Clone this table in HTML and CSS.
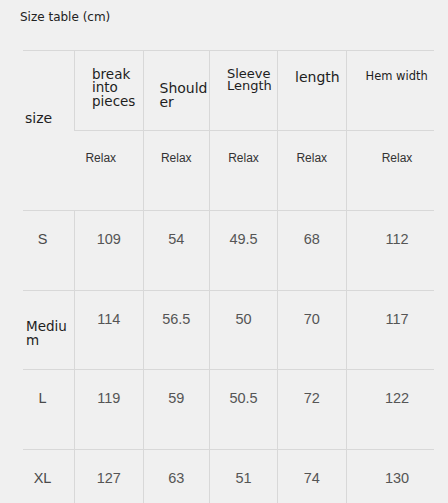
FILE: index.html
```html
<!DOCTYPE html>
<html lang="en">
<head>
<meta charset="utf-8">
<title>Size table</title>
<link rel="stylesheet" href="styles.css">
</head>
<body>
<div class="title">Size table (cm)</div>
<div class="sheet">
  <div class="cell hd hd-size">size</div>
  <div class="cell hd hd-break vl">break into pieces</div>
  <div class="cell hd hd-shoulder vl">Shoulder</div>
  <div class="cell hd hd-sleeve vl">Sleeve Length</div>
  <div class="cell hd hd-length vl">length</div>
  <div class="cell hd hd-hem vl">Hem width</div>

  <div class="cell relax relax-first">Relax</div>
  <div class="cell relax vl">Relax</div>
  <div class="cell relax vl">Relax</div>
  <div class="cell relax vl">Relax</div>
  <div class="cell relax last vl">Relax</div>

  <div class="cell lbl">S</div>
  <div class="cell num vl">109</div>
  <div class="cell num vl">54</div>
  <div class="cell num vl">49.5</div>
  <div class="cell num vl">68</div>
  <div class="cell num last vl">112</div>

  <div class="cell lbl-word"><span class="word">Medium</span></div>
  <div class="cell num vl">114</div>
  <div class="cell num vl">56.5</div>
  <div class="cell num vl">50</div>
  <div class="cell num vl">70</div>
  <div class="cell num last vl">117</div>

  <div class="cell lbl">L</div>
  <div class="cell num vl">119</div>
  <div class="cell num vl">59</div>
  <div class="cell num vl">50.5</div>
  <div class="cell num vl">72</div>
  <div class="cell num last vl">122</div>

  <div class="cell lbl">XL</div>
  <div class="cell num vl">127</div>
  <div class="cell num vl">63</div>
  <div class="cell num vl">51</div>
  <div class="cell num vl">74</div>
  <div class="cell num last vl">130</div>
</div>
</body>
</html>
```

FILE: styles.css
```css
* { box-sizing: border-box; }

html, body {
  margin: 0;
  padding: 0;
  background: #f0f0f0;
  overflow: hidden;
}

body {
  width: 448px;
  height: 503px;
  font-family: "DejaVu Sans", "Noto Sans", sans-serif;
  color: #222;
}

.title {
  padding: 10px 0 0 20px;
  font-size: 12px;
  line-height: 14px;
  height: 50px;
  color: #222;
}

.sheet {
  margin-left: 23px;
  width: 410.5px;
  display: grid;
  grid-template-columns: 51px 68.5px 66.5px 68px 68.5px 88px;
  grid-template-rows: 80px 79.5px 80px 79px 80px 54px;
}

.cell {
  border-top: 1px solid #d8d8d8;
}

.vl {
  border-left: 1px solid #d8d8d8;
}

/* header row */
.hd {
  font-family: "DejaVu Sans", sans-serif;
  color: #1e1e1e;
  text-align: left;
}

.hd-size {
  grid-row: 1 / 3;
  font-size: 14px;
  line-height: 14px;
  padding: 59.6px 0 0 2px;
}

.hd-break {
  font-size: 13.5px;
  line-height: 13.5px;
  padding: 16.6px 0 0 17px;
}

.hd-shoulder {
  font-size: 14px;
  line-height: 14px;
  padding: 30px 0 0 16px;
  word-break: break-all;
}

.hd-sleeve {
  font-size: 13px;
  line-height: 11.5px;
  padding: 17px 0 0 17px;
}

.hd-length {
  font-size: 14px;
  line-height: 14px;
  padding: 19.4px 0 0 17px;
}

.hd-hem {
  font-size: 11.5px;
  line-height: 13px;
  padding: 18.6px 0 0 19px;
}

/* relax row */
.relax {
  font-family: "Liberation Sans", Arial, sans-serif;
  font-size: 12px;
  line-height: 14px;
  color: #333;
  text-align: center;
  padding-top: 20px;
}

.relax-first {
  padding-right: 15px;
}

/* data rows */
.num,
.lbl {
  font-family: "Liberation Sans", Arial, sans-serif;
  font-size: 14.5px;
  line-height: 17px;
  color: #555;
  text-align: center;
  padding-top: 20px;
}

.lbl {
  color: #4a4a4a;
  padding-right: 12px;
}

.last {
  padding-left: 14px;
}

.lbl-word {
  font-family: "DejaVu Sans", sans-serif;
  font-size: 13.5px;
  line-height: 14.5px;
  color: #1e1e1e;
  padding: 28px 0 0 3px;
}

.word {
  display: block;
  width: 46px;
  word-break: break-all;
}
```
